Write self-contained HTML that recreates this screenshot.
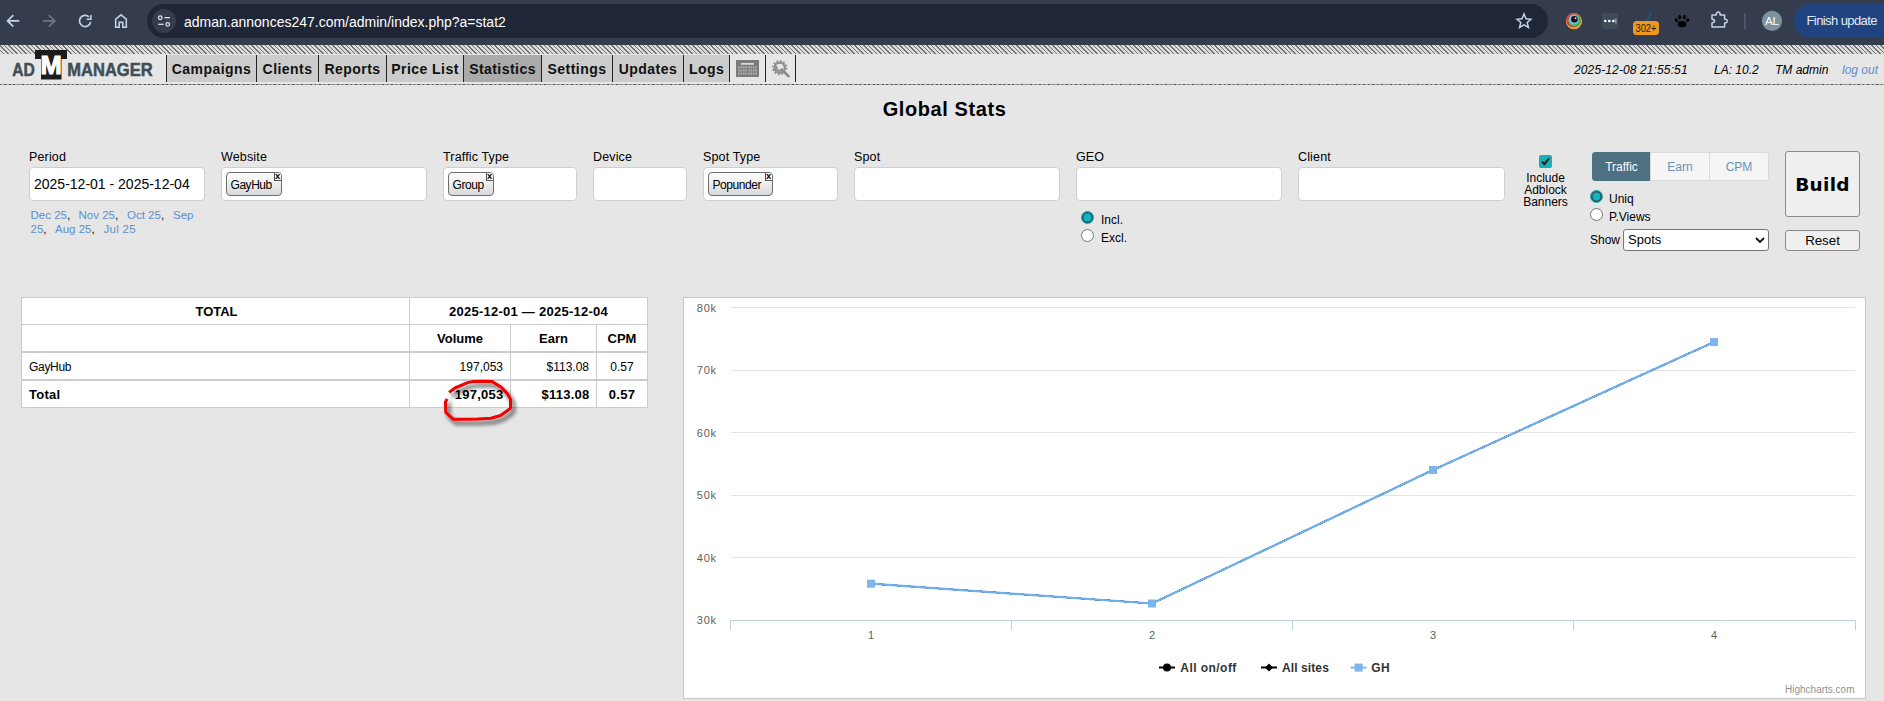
<!DOCTYPE html>
<html lang="en">
<head>
<meta charset="utf-8">
<title>Global Stats</title>
<style>
*{box-sizing:border-box;margin:0;padding:0}
html,body{width:1884px;height:701px;overflow:hidden;background:#e6e6e6;font-family:"Liberation Sans",sans-serif;color:#000}
body{position:relative}
.abs,.t{position:absolute;white-space:nowrap}
#chrome{position:absolute;left:0;top:0;width:1884px;height:45px;background:#343c4d}
#urlbar{position:absolute;left:147px;top:4px;width:1401px;height:34px;border-radius:17px;background:#1f2638}
#siteinfo{position:absolute;left:5px;top:5px;width:24px;height:24px;border-radius:12px;background:#343c4d}
#url{position:absolute;left:37px;top:9px;font-size:14px;line-height:18px;color:#fff;white-space:nowrap}
#hatch{position:absolute;left:0;top:45px;width:1884px;height:9px;background:repeating-linear-gradient(45deg,#dadada 0,#dcdcdc 2.45px,#727272 2.45px,#727272 3.182px)}
#nav{position:absolute;left:0;top:54px;width:1884px;height:31px}
#dash{position:absolute;left:0;top:84px;width:1884px;height:1px;background:repeating-linear-gradient(90deg,#505050 0,#505050 1.5px,#a4a4a4 1.5px,#a4a4a4 4.5px)}
.tab{position:absolute;top:1px;height:27px;background:#ccc;border-left:1px solid #222;font-weight:bold;font-size:14px;line-height:29px;letter-spacing:.45px;color:#111;text-align:center;white-space:nowrap}
.tab.act{background:#aaa}
.tab.ico{background:transparent}
.nr{position:absolute;top:63px;font-style:italic;font-size:12px;line-height:14px;white-space:nowrap}
h1{position:absolute;left:1.6px;width:1886px;top:97px;text-align:center;font-size:20px;line-height:24px;font-weight:bold;letter-spacing:.6px}
.lbl{position:absolute;top:150px;letter-spacing:.15px;font-size:12.5px;line-height:15px;white-space:nowrap}
.box{position:absolute;top:167px;height:34px;background:#fff;border:1px solid #cfcfcf;border-radius:4px}
.tag{position:absolute;top:4px;height:24px;border:1px solid #6e6e6e;border-radius:4px;background:linear-gradient(#fdfdfd,#efefef 45%,#d5d8db);font-size:12px;line-height:24px;padding-left:3.5px;letter-spacing:-.45px;white-space:nowrap}
.tag i{position:absolute;right:0;top:0;width:7.5px;height:7.5px;border:1px solid #555;border-width:0 0 1px 1px;border-radius:0 3px 0 0;background:#f8f8f8;font-style:normal;font-weight:bold;font-size:9.5px;line-height:5.5px;letter-spacing:0;text-align:center;overflow:hidden}
.lnk{position:absolute;font-size:11.5px;line-height:14px;color:#5b8fd0;white-space:nowrap}
.lnk b{font-weight:normal;color:#000}
.radio{position:absolute;width:13px;height:13px;border-radius:50%;background:#fff;border:1px solid #777}
.radio.on{background:#0bb8c3;border:1px solid #12a3ab;box-shadow:inset 0 0 0 1.6px #4a4a4a}
.s12{position:absolute;font-size:12px;line-height:14px;white-space:nowrap}
.seg{position:absolute;top:152px;height:29px;font-size:12px;line-height:29px;text-align:center;border:1px solid #d9d9d9;background:#f5f5f5;color:#6893b6}
.btn{position:absolute;background:#efefef;border:1px solid #8a8a8a;border-radius:3px;text-align:center}
table{position:absolute;left:21px;top:297px;border-collapse:collapse;background:#fff}
td{border:1px solid #ccc;font-size:12px;height:27px;padding:0}
tr.r2 td{height:28px;padding-top:1px}
tr.r1 td{padding-top:2px}
tr.r3 td{padding-top:3px}
td.b{font-weight:bold;font-size:13px;letter-spacing:.25px}
</style>
</head>
<body>
<div id="chrome">

  <svg class="abs" style="left:0;top:0" width="147" height="45" viewBox="0 0 147 45" fill="none" stroke-linecap="butt" stroke-linejoin="miter">
    <g stroke="#c5cfe6" stroke-width="1.7">
      <path d="M19.3 20.9H8.2M13.3 15.1L7.5 20.9L13.3 26.7"/>
      <path d="M90.6 21.9A5.6 5.6 0 1 1 88.9 16.9"/>
      <path d="M90.9 15V19.3H86.6" stroke-width="1.6"/>
      <path d="M115.7 27.2V19.2L121 14.9L126.3 19.2V27.2H122.8V22.4H119.2V27.2Z" stroke-width="1.6"/>
    </g>
    <g stroke="#6d758a" stroke-width="1.7">
      <path d="M43.1 20.9H54M48.9 15.1L54.7 20.9L48.9 26.7"/>
    </g>
  </svg>

  <div id="urlbar">
    <div id="siteinfo"><svg width="24" height="24" viewBox="152 9 24 24" fill="none" stroke="#dfe5f2" stroke-width="1.25" style="display:block"><circle cx="160.2" cy="17.7" r="1.8"/><path d="M164.4 17.7H170"/><path d="M158.2 24.3H163.6"/><circle cx="167.7" cy="24.3" r="1.8"/></svg></div>
    <div id="url">adman.annonces247.com/admin/index.php?a=stat2</div>
  </div>
  <svg class="abs" style="left:1500px;top:0" width="384" height="45" viewBox="1500 0 384 45">
    <path d="M1524 14L1526 18.7L1531 19.2L1527.2 22.5L1528.4 27.4L1524 24.8L1519.6 27.4L1520.8 22.5L1517 19.2L1522 18.7Z" fill="none" stroke="#c5cfe6" stroke-width="1.5" stroke-linejoin="miter"/>
    <circle cx="1574" cy="21.2" r="8.1" fill="#f4a640"/>
    <circle cx="1573.6" cy="20.3" r="7.3" fill="#e43d30"/>
    <circle cx="1574.6" cy="20.6" r="6.2" fill="#3cb54a"/>
    <circle cx="1573.8" cy="19.6" r="5.1" fill="#5fc6ee"/>
    <circle cx="1574.4" cy="19.3" r="3.3" fill="#2a0908"/>
    <circle cx="1575.6" cy="18.2" r="0.9" fill="#fff"/>
    <rect x="1602" y="13" width="16" height="16" rx="1.5" fill="#3f4b58"/>
    <circle cx="1605.3" cy="21" r="1.3" fill="#fff"/><circle cx="1609.3" cy="21" r="1.3" fill="#fff"/><circle cx="1613.3" cy="21" r="1.3" fill="#fff"/>
    <rect x="1615.4" y="18.6" width="1" height="4.8" fill="#c8ced6"/>
    <path d="M1650.5 13Q1650.3 17.5 1646.5 19.6" fill="none" stroke="#1d5c8c" stroke-width="1.4"/>
    <rect x="1633" y="21" width="26" height="14" rx="3.5" fill="#f0981e"/>
    <text x="1646" y="31.7" font-size="10.5" fill="#1a1a1a" text-anchor="middle" font-family="Liberation Sans, sans-serif" textLength="21" lengthAdjust="spacingAndGlyphs">302+</text>
    <g fill="#000">
      <ellipse cx="1682" cy="24.2" rx="4.3" ry="3.1"/>
      <ellipse cx="1676.4" cy="20.2" rx="1.5" ry="2" transform="rotate(-25 1676.4 20.2)"/>
      <ellipse cx="1679.8" cy="17.2" rx="1.5" ry="2.1" transform="rotate(-8 1679.8 17.2)"/>
      <ellipse cx="1684.3" cy="17.2" rx="1.5" ry="2.1" transform="rotate(8 1684.3 17.2)"/>
      <ellipse cx="1687.7" cy="20.2" rx="1.5" ry="2" transform="rotate(25 1687.7 20.2)"/>
    </g>
    <path d="M1712 15.1H1716.3V14A1.9 1.9 0 0 1 1720.1 14V15.1H1724.6V19.3H1725.4A1.8 1.8 0 0 1 1725.4 22.9H1724.6V27.1H1712V22.9Q1714.6 22.6 1714.6 21.1Q1714.6 19.6 1712 19.3Z" fill="none" stroke="#c5cfe6" stroke-width="1.5" stroke-linejoin="round"/>
    <rect x="1744.2" y="13" width="1.3" height="16" fill="#586178"/>
    <circle cx="1772" cy="20.9" r="10.1" fill="#7c939f"/>
    <text x="1772" y="25" font-size="11.5" fill="#fff" text-anchor="middle" font-family="Liberation Sans, sans-serif">AL</text>
    <path d="M1884 4H1811A17 17 0 0 0 1811 38H1884Z" fill="#1f4480"/>
    <text x="1806.5" y="24.7" font-size="13" fill="#e2e9f8" font-family="Liberation Sans, sans-serif" textLength="71" lengthAdjust="spacing">Finish update</text>
  </svg>
</div>
<div id="hatch"></div>
<div id="nav">
  <div class="tab" style="left:166px;width:90px">Campaigns</div>
  <div class="tab" style="left:256px;width:62px">Clients</div>
  <div class="tab" style="left:318px;width:68px">Reports</div>
  <div class="tab" style="left:386px;width:77px">Price List</div>
  <div class="tab act" style="left:463px;width:78px">Statistics</div>
  <div class="tab" style="left:541px;width:71px">Settings</div>
  <div class="tab" style="left:612px;width:71px">Updates</div>
  <div class="tab" style="left:683px;width:46px">Logs</div>
  <div class="tab ico" style="left:729px;width:36px"><svg width="23" height="17" viewBox="0 0 23 17" style="position:absolute;left:6px;top:5px"><rect width="23" height="17" fill="#7b7b7b"/><rect x="5" y="3.2" width="13" height="1.4" fill="#f2f2f2"/><g fill="#b4b4b4"><rect x="2.20" y="6.4" width="1.6" height="1.9"/><rect x="4.55" y="6.4" width="1.6" height="1.9"/><rect x="6.90" y="6.4" width="1.6" height="1.9"/><rect x="9.25" y="6.4" width="1.6" height="1.9"/><rect x="12.20" y="6.4" width="1.6" height="1.9"/><rect x="14.55" y="6.4" width="1.6" height="1.9"/><rect x="16.90" y="6.4" width="1.6" height="1.9"/><rect x="19.25" y="6.4" width="1.6" height="1.9"/><rect x="2.20" y="9.5" width="1.6" height="1.9"/><rect x="4.55" y="9.5" width="1.6" height="1.9"/><rect x="6.90" y="9.5" width="1.6" height="1.9"/><rect x="9.25" y="9.5" width="1.6" height="1.9"/><rect x="12.20" y="9.5" width="1.6" height="1.9"/><rect x="14.55" y="9.5" width="1.6" height="1.9"/><rect x="16.90" y="9.5" width="1.6" height="1.9"/><rect x="19.25" y="9.5" width="1.6" height="1.9"/><rect x="2.20" y="12.6" width="1.6" height="1.9"/><rect x="4.55" y="12.6" width="1.6" height="1.9"/><rect x="6.90" y="12.6" width="1.6" height="1.9"/><rect x="9.25" y="12.6" width="1.6" height="1.9"/><rect x="12.20" y="12.6" width="1.6" height="1.9"/><rect x="14.55" y="12.6" width="1.6" height="1.9"/><rect x="16.90" y="12.6" width="1.6" height="1.9"/><rect x="19.25" y="12.6" width="1.6" height="1.9"/></g></svg></div>
  <div class="tab ico" style="left:765px;width:30px"><svg width="24" height="24" viewBox="768 56 24 24" style="position:absolute;left:2px;top:1px"><g fill="none" stroke="#8c8c8c"><circle cx="779.7" cy="67.7" r="5.1" stroke-width="2.2"/><circle cx="779.7" cy="67.7" r="6.8" stroke-width="1.6" stroke-dasharray="1.95 1.61"/></g><path d="M781.5 69.5L788.6 76.2" stroke="#8c8c8c" stroke-width="2.6" stroke-linecap="round"/><path d="M776.8 66.2A3.2 3.2 0 0 0 782 69.8" fill="none" stroke="#8c8c8c" stroke-width="1.8"/></svg></div>
  <div class="tab ico" style="left:795px;width:1px"></div>
</div>
<svg class="abs" style="left:0;top:45px;font-family:'Liberation Sans',sans-serif;font-weight:bold" width="166" height="40" viewBox="0 45 166 40">
  <path d="M35 50H67V59H61.5V79.6H41V59H35Z" fill="#1c1c1c"/>
  <text x="40.6" y="74.1" font-size="25.5" fill="#fff" stroke="#fff" stroke-width="1.1" stroke-linejoin="miter">M</text>
  <text x="12.2" y="75.8" font-size="17.6" fill="#414e58" stroke="#414e58" stroke-width=".5" textLength="22.6" lengthAdjust="spacingAndGlyphs">AD</text>
  <text x="67.3" y="75.8" font-size="17.6" fill="#414e58" stroke="#414e58" stroke-width=".5" textLength="85.3" lengthAdjust="spacingAndGlyphs">MANAGER</text>
</svg>
<div id="dash"></div>
<div class="nr" style="left:1574px;letter-spacing:.12px">2025-12-08 21:55:51</div>
<div class="nr" style="left:1714px">LA: 10.2</div>
<div class="nr" style="left:1775px">TM admin</div>
<div class="nr" style="left:1842px;color:#5b8fd0">log out</div>

<h1>Global Stats</h1>

<div class="lbl" style="left:29px">Period</div>
<div class="lbl" style="left:221px">Website</div>
<div class="lbl" style="left:443px">Traffic Type</div>
<div class="lbl" style="left:593px">Device</div>
<div class="lbl" style="left:703px">Spot Type</div>
<div class="lbl" style="left:854px">Spot</div>
<div class="lbl" style="left:1076px">GEO</div>
<div class="lbl" style="left:1298px">Client</div>

<div class="box" style="left:29px;width:176px"><span class="t" style="left:4px;top:7px;font-size:14px;line-height:18px">2025-12-01 - 2025-12-04</span></div>
<div class="box" style="left:221px;width:206px"><div class="tag" style="left:4px;width:56px">GayHub<i>x</i></div></div>
<div class="box" style="left:443px;width:134px"><div class="tag" style="left:4px;width:46px">Group<i>x</i></div></div>
<div class="box" style="left:593px;width:94px"></div>
<div class="box" style="left:703px;width:135px"><div class="tag" style="left:4px;width:65px">Popunder<i>x</i></div></div>
<div class="box" style="left:854px;width:206px"></div>
<div class="box" style="left:1076px;width:206px"></div>
<div class="box" style="left:1298px;width:207px"></div>

<div class="lnk" style="left:30.5px;top:208px">Dec 25<b>,</b></div>
<div class="lnk" style="left:78.5px;top:208px">Nov 25<b>,</b></div>
<div class="lnk" style="left:127px;top:208px">Oct 25<b>,</b></div>
<div class="lnk" style="left:173px;top:208px">Sep</div>
<div class="lnk" style="left:30.5px;top:222px">25<b>,</b></div>
<div class="lnk" style="left:55px;top:222px">Aug 25<b>,</b></div>
<div class="lnk" style="left:103.5px;top:222px;letter-spacing:.3px">Jul 25</div>

<div class="radio on" style="left:1081px;top:211px"></div>
<div class="s12" style="left:1101px;top:213px">Incl.</div>
<div class="radio" style="left:1081px;top:229px"></div>
<div class="s12" style="left:1101px;top:231px">Excl.</div>

<div class="abs" style="left:1539px;top:155px;width:13px;height:13px;background:#18b0b8;border-radius:2px"><svg width="13" height="13" viewBox="0 0 13 13" style="display:block"><path d="M3 6.6 L5.4 9.2 L10 3.4" fill="none" stroke="#222" stroke-width="2"/></svg></div>
<div class="s12" style="left:1515.5px;width:60px;top:172px;line-height:12px;text-align:center;white-space:normal">Include Adblock Banners</div>

<div class="seg" style="left:1592px;width:59px;background:#4d7083;border-color:#4d7083;color:#fff;border-radius:3px 0 0 3px">Traffic</div>
<div class="seg" style="left:1650px;width:60px">Earn</div>
<div class="seg" style="left:1709px;width:60px;border-radius:0 3px 3px 0">CPM</div>

<div class="radio on" style="left:1590px;top:190px"></div>
<div class="s12" style="left:1609px;top:192px">Uniq</div>
<div class="radio" style="left:1590px;top:208px"></div>
<div class="s12" style="left:1609px;top:210px">P.Views</div>
<div class="s12" style="left:1590px;top:233px">Show</div>
<div class="abs" style="left:1623px;top:229px;width:146px;height:22px;background:#fff;border:1px solid #767676;border-radius:3px"><span class="t" style="left:4px;top:2px;font-size:13px;line-height:16px">Spots</span><svg class="abs" style="left:131px;top:7px" width="10" height="7" viewBox="0 0 10 7"><path d="M1 1 L5 5 L9 1" fill="none" stroke="#111" stroke-width="1.8"/></svg></div>

<div class="btn" style="left:1785px;top:151px;width:75px;height:66px;font-family:'DejaVu Sans',sans-serif;font-weight:bold;font-size:18.5px;letter-spacing:.3px;line-height:66px">Build</div>
<div class="btn" style="left:1785px;top:230px;width:75px;height:21px;font-size:13.3px;line-height:20px">Reset</div>

<table>
<tr><td class="b" style="width:388px;text-align:center;padding-left:2px;letter-spacing:0">TOTAL</td><td colspan="3" class="b" style="text-align:center">2025-12-01 — 2025-12-04</td></tr>
<tr class="r1"><td></td><td style="width:101px;text-align:center;font-weight:bold;font-size:13px">Volume</td><td style="width:86px;text-align:center;font-weight:bold;font-size:13px">Earn</td><td style="width:51px;text-align:center;font-weight:bold;font-size:13px">CPM</td></tr>
<tr class="r2 r3"><td style="padding-left:7px;border-top-width:2px;letter-spacing:-.3px">GayHub</td><td style="text-align:right;padding-right:7px;border-top-width:2px">197,053</td><td style="text-align:right;padding-right:7px;border-top-width:2px">$113.08</td><td style="text-align:center;border-top-width:2px">0.57</td></tr>
<tr class="r2"><td class="b" style="padding-left:7px;border-top-width:2px">Total</td><td class="b" style="text-align:right;padding-right:6.5px;border-top-width:2px">197,053</td><td class="b" style="text-align:right;padding-right:6.5px;border-top-width:2px">$113.08</td><td class="b" style="text-align:center;border-top-width:2px">0.57</td></tr>
</table>

<svg class="abs" style="left:430px;top:370px;overflow:visible" width="100" height="65" viewBox="430 370 100 65">
<defs><filter id="sh" x="-20%" y="-20%" width="150%" height="150%"><feGaussianBlur in="SourceAlpha" stdDeviation="2.2"/><feOffset dx="2.5" dy="3.5"/><feComponentTransfer><feFuncA type="linear" slope=".7"/></feComponentTransfer><feMerge><feMergeNode/><feMergeNode in="SourceGraphic"/></feMerge></filter></defs>
<path filter="url(#sh)" d="M449 392.4 L455 388 L467 382.8 L473.3 381.4 L483 381.2 L491.7 381.4 L501.3 387.2 L507.3 393.6 L510.5 399.2 L510.5 408 L506.9 411.1 L500.5 415.5 L490.9 418.3 L478 419.1 L467 419.3 L453.4 419.3 L445.8 412.3 L445.4 402.4 L447 398.8" fill="none" stroke="#f40000" stroke-width="3" stroke-linejoin="round" stroke-linecap="butt"/>
</svg>

<div class="abs" id="chart" style="left:683px;top:297px;width:1183px;height:402px;background:#fff;border:1px solid #c6c6c6">
<svg width="1181" height="400" viewBox="684 298 1181 400" style="display:block;font-family:'Liberation Sans',sans-serif">
<g stroke="#e3e3e3" stroke-width="1" shape-rendering="crispEdges">
<path d="M731 307.5H1855M731 370.5H1855M731 432.5H1855M731 495.5H1855M731 557.5H1855"/>
</g>
<g stroke="#c0d0e0" stroke-width="1" fill="none" shape-rendering="crispEdges">
<path d="M730 620.5H1855M730.5 620V630M1011.5 620V630M1292.5 620V630M1573.5 620V630M1855.5 620V630"/>
</g>
<g font-size="11" fill="#606060" text-anchor="end" letter-spacing=".7" transform="translate(.7 0)">
<text x="716" y="312">80k</text><text x="716" y="374">70k</text><text x="716" y="437">60k</text><text x="716" y="499">50k</text><text x="716" y="562">40k</text><text x="716" y="624">30k</text>
</g>
<g font-size="11" fill="#606060" text-anchor="middle">
<text x="871" y="639">1</text><text x="1152" y="639">2</text><text x="1433" y="639">3</text><text x="1714" y="639">4</text>
</g>
<path d="M871 583.7 L1152 603.5 L1433 470 L1714 342" fill="none" stroke="#586470" stroke-width="2" stroke-linejoin="round" shape-rendering="crispEdges"/><path d="M871 583.7 L1152 603.5 L1433 470 L1714 342" fill="none" stroke="#70b0ec" stroke-width="2.25" stroke-linejoin="round"/>
<g fill="#7cb5ec"><rect x="867" y="579.7" width="8" height="8"/><rect x="1148" y="599.5" width="8" height="8"/><rect x="1429" y="466" width="8" height="8"/><rect x="1710" y="338" width="8" height="8"/></g>
<g stroke="#000" stroke-width="2"><path d="M1159 667.6H1175M1261 667.6H1277"/></g>
<circle cx="1167" cy="667.6" r="4" fill="#000"/>
<path d="M1269 663.6L1273 667.6L1269 671.6L1265 667.6Z" fill="#000"/>
<path d="M1350.6 667.6H1366.6" stroke="#7cb5ec" stroke-width="2"/>
<rect x="1354.6" y="663.6" width="8" height="8" fill="#7cb5ec"/>
<g font-size="12" font-weight="bold" fill="#333" letter-spacing=".45">
<text x="1180.3" y="671.6">All on/off</text><text x="1282" y="671.6" letter-spacing=".1">All sites</text><text x="1371.3" y="671.6">GH</text>
</g>
<text x="1854.5" y="692.5" font-size="10" fill="#909090" text-anchor="end">Highcharts.com</text>
</svg>
</div>
</body>
</html>
